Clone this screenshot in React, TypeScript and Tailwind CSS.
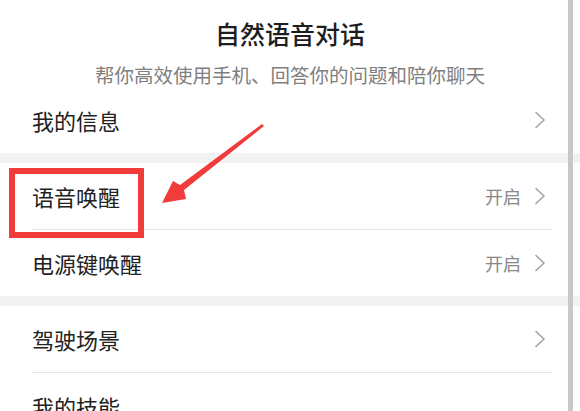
import React from "react";

const font = { fontFamily: '"Noto Sans CJK SC", "Noto Sans", sans-serif' };

function Chevron() {
  return (
    <svg width="12" height="18" viewBox="0 0 12 18" className="shrink-0">
      <path d="M2 1.5 L10 9 L2 16.5" fill="none" stroke="#a3a3a3" strokeWidth="1.6" strokeLinecap="round" strokeLinejoin="round" />
    </svg>
  );
}

function Row({ label, value, divider, noChevron }: { label: string; value?: string; divider?: boolean; noChevron?: boolean }) {
  return (
    <div className="relative">
      <div className="flex h-[66px] items-center pl-[32px] pr-[34px]">
        <span className="flex-1 text-[22px] leading-[24px] text-[#222222]">{label}</span>
        {value && <span className="mr-[13px] text-[18px] leading-[20px] text-[#888888]">{value}</span>}
        {!noChevron && <Chevron />}
      </div>
      {divider && <div className="ml-[32px] mr-[27px] h-px bg-[#e6e6e6]" />}
    </div>
  );
}

export default function App() {
  return (
    <div className="relative h-[411px] w-[580px] overflow-hidden bg-white" style={font}>
      <div className="flex h-[87px] flex-col items-center">
        <div className="mt-[21px] text-[25px] font-medium leading-[25px] text-[#1e1e1e]">自然语音对话</div>
        <div className="mt-[19px] text-[19.5px] leading-[20px] text-[#7f7f7f]">帮你高效使用手机、回答你的问题和陪你聊天</div>
      </div>
      <Row label="我的信息" />
      <div className="h-[10px] bg-[#f2f2f2]" />
      <Row label="语音唤醒" value="开启" divider />
      <Row label="电源键唤醒" value="开启" />
      <div className="h-[10px] bg-[#f2f2f2]" />
      <Row label="驾驶场景" divider />
      <Row label="我的技能" noChevron />

      {/* scrollbar */}
      <div className="absolute right-[7px] top-0 h-full w-[5px] bg-[#c8c8c8]" />

      {/* red highlight box */}
      <div className="absolute left-[9px] top-[168px] h-[70px] w-[135px] border-[6px] border-[#f23b3b]" />

      {/* red arrow */}
      <svg className="absolute left-0 top-0" width="580" height="411" viewBox="0 0 580 411">
        <polygon
          points="262,124 180,185 173,181 162,203 186,199 184,190 264,126"
          fill="#f23b3b"
        />
      </svg>
    </div>
  );
}
